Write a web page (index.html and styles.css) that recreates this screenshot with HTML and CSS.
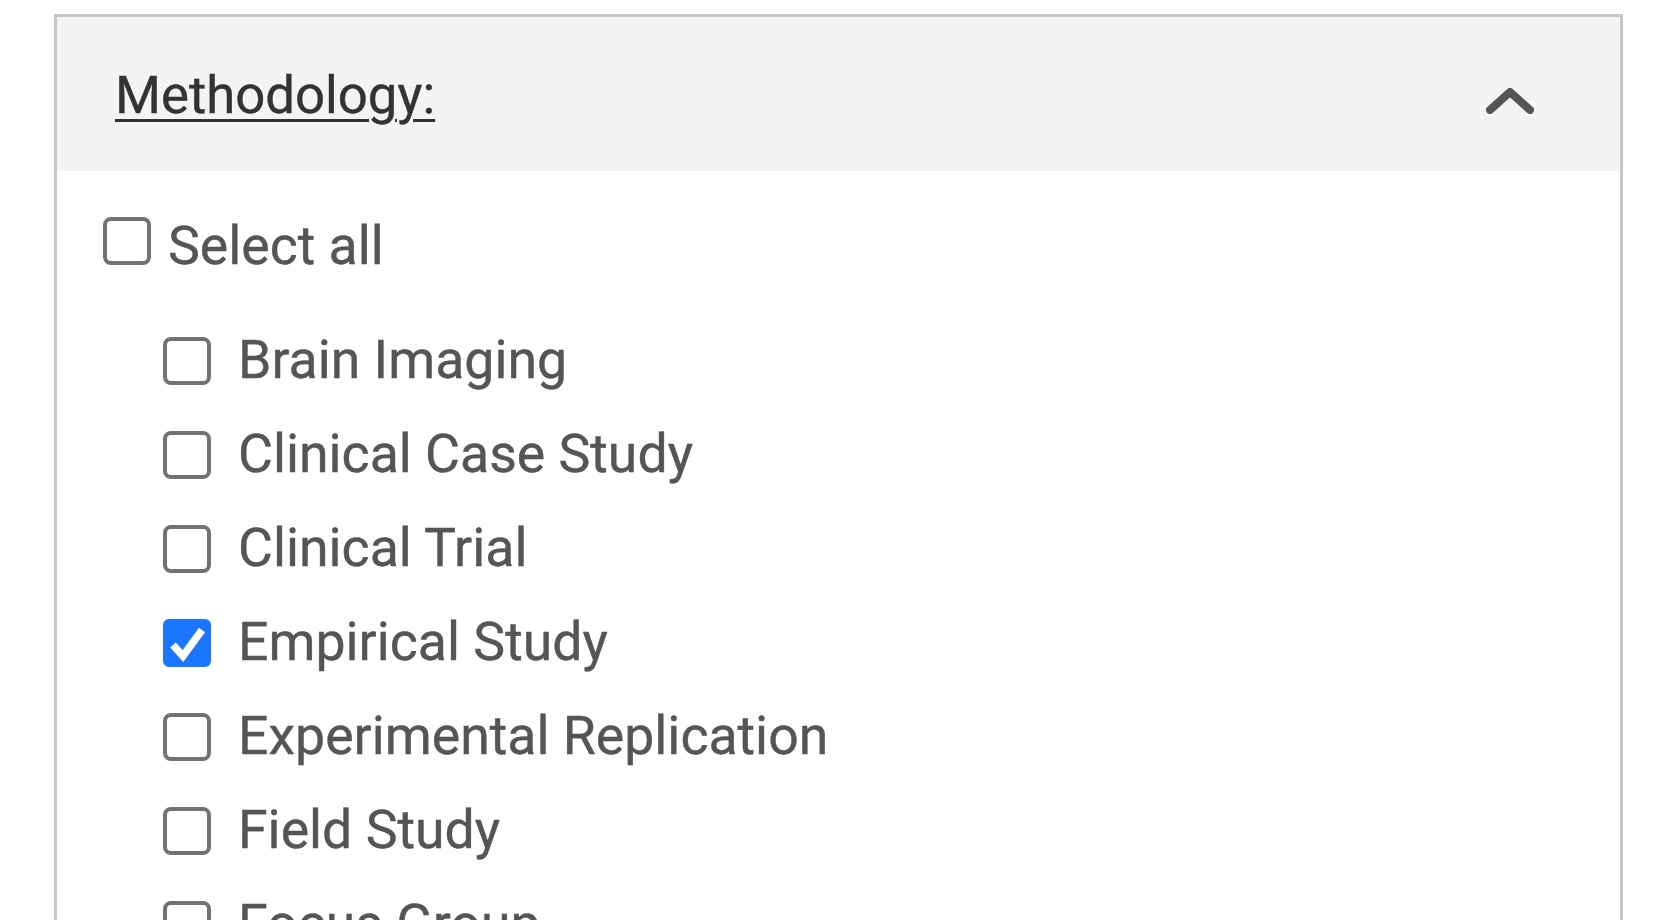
FILE: index.html
```html
<!DOCTYPE html>
<html lang="en">
<head>
<meta charset="utf-8">
<title>Methodology filter</title>
<link rel="stylesheet" href="styles.css">
</head>
<body>
<section class="panel">
  <header class="panel-head">
    <a class="panel-title" href="#">Methodology:</a>
    <svg class="chevron" width="48" height="26" viewBox="0 0 48 26" aria-hidden="true">
      <polyline points="4,22 24,4 44,22" fill="none" stroke="#555" stroke-width="8" stroke-linecap="round" stroke-linejoin="round"/>
    </svg>
  </header>
  <div class="panel-body">
    <label class="opt opt-all"><span class="box"></span><span class="lbl">Select all</span></label>
    <ul class="list">
      <li class="opt"><span class="box"></span><span class="lbl">Brain Imaging</span></li>
      <li class="opt"><span class="box"></span><span class="lbl">Clinical Case Study</span></li>
      <li class="opt"><span class="box"></span><span class="lbl">Clinical Trial</span></li>
      <li class="opt"><span class="box checked"><svg width="48" height="48" viewBox="0 0 48 48"><polyline points="10,26 20,37 39,11" fill="none" stroke="#fff" stroke-width="7.5" stroke-linecap="butt" stroke-linejoin="miter"/></svg></span><span class="lbl">Empirical Study</span></li>
      <li class="opt"><span class="box"></span><span class="lbl">Experimental Replication</span></li>
      <li class="opt"><span class="box"></span><span class="lbl">Field Study</span></li>
      <li class="opt"><span class="box"></span><span class="lbl">Focus Group</span></li>
    </ul>
  </div>
</section>
</body>
</html>
```

FILE: styles.css
```css
html, body {
  margin: 0;
  padding: 0;
  background: #fff;
  font-family: Roboto, "Liberation Sans", Arial, sans-serif;
}
body {
  height: 920px;
  overflow: hidden;
}
.panel {
  margin: 14px 57px 0 54px;
  border: 3px solid #c8c8c8;
  border-bottom: none;
  height: 1000px;
}
.panel-head {
  height: 154px;
  background: #f4f4f4;
  display: flex;
  align-items: center;
  justify-content: space-between;
  padding: 0 86px 0 58px;
}
.panel-title {
  font-size: 52.7px;
  color: #333;
  text-decoration: underline;
  text-decoration-thickness: 3px;
  text-underline-offset: 6px;
  margin-top: 2px;
  -webkit-text-stroke: 0.4px #333;
}
.chevron {
  display: block;
  margin-top: 14px;
}
.panel-body {
  padding: 46px 0 0 46px;
}
.opt {
  display: flex;
  align-items: center;
  font-size: 53.6px;
  color: #555;
  height: 48px;
  -webkit-text-stroke: 0.4px #555;
}
.opt-all .lbl {
  margin-left: 17px;
  margin-top: 10px;
}
.list {
  list-style: none;
  margin: 72px 0 0 0;
  padding: 0 0 0 60px;
  display: flex;
  flex-direction: column;
  gap: 46px;
}
.list .lbl {
  margin-left: 27px;
  margin-top: -3px;
}
.box {
  box-sizing: border-box;
  width: 48px;
  height: 48px;
  border: 4px solid #727272;
  border-radius: 8px;
  flex: none;
  background: #fff;
  display: block;
  -webkit-text-stroke: 0;
}
.box.checked {
  background: #1a75ff;
  border-color: #1a75ff;
  position: relative;
  border-radius: 6px;
}
.box.checked svg {
  position: absolute;
  left: -4px;
  top: -4px;
}
.lbl {
  line-height: 48px;
}
```
